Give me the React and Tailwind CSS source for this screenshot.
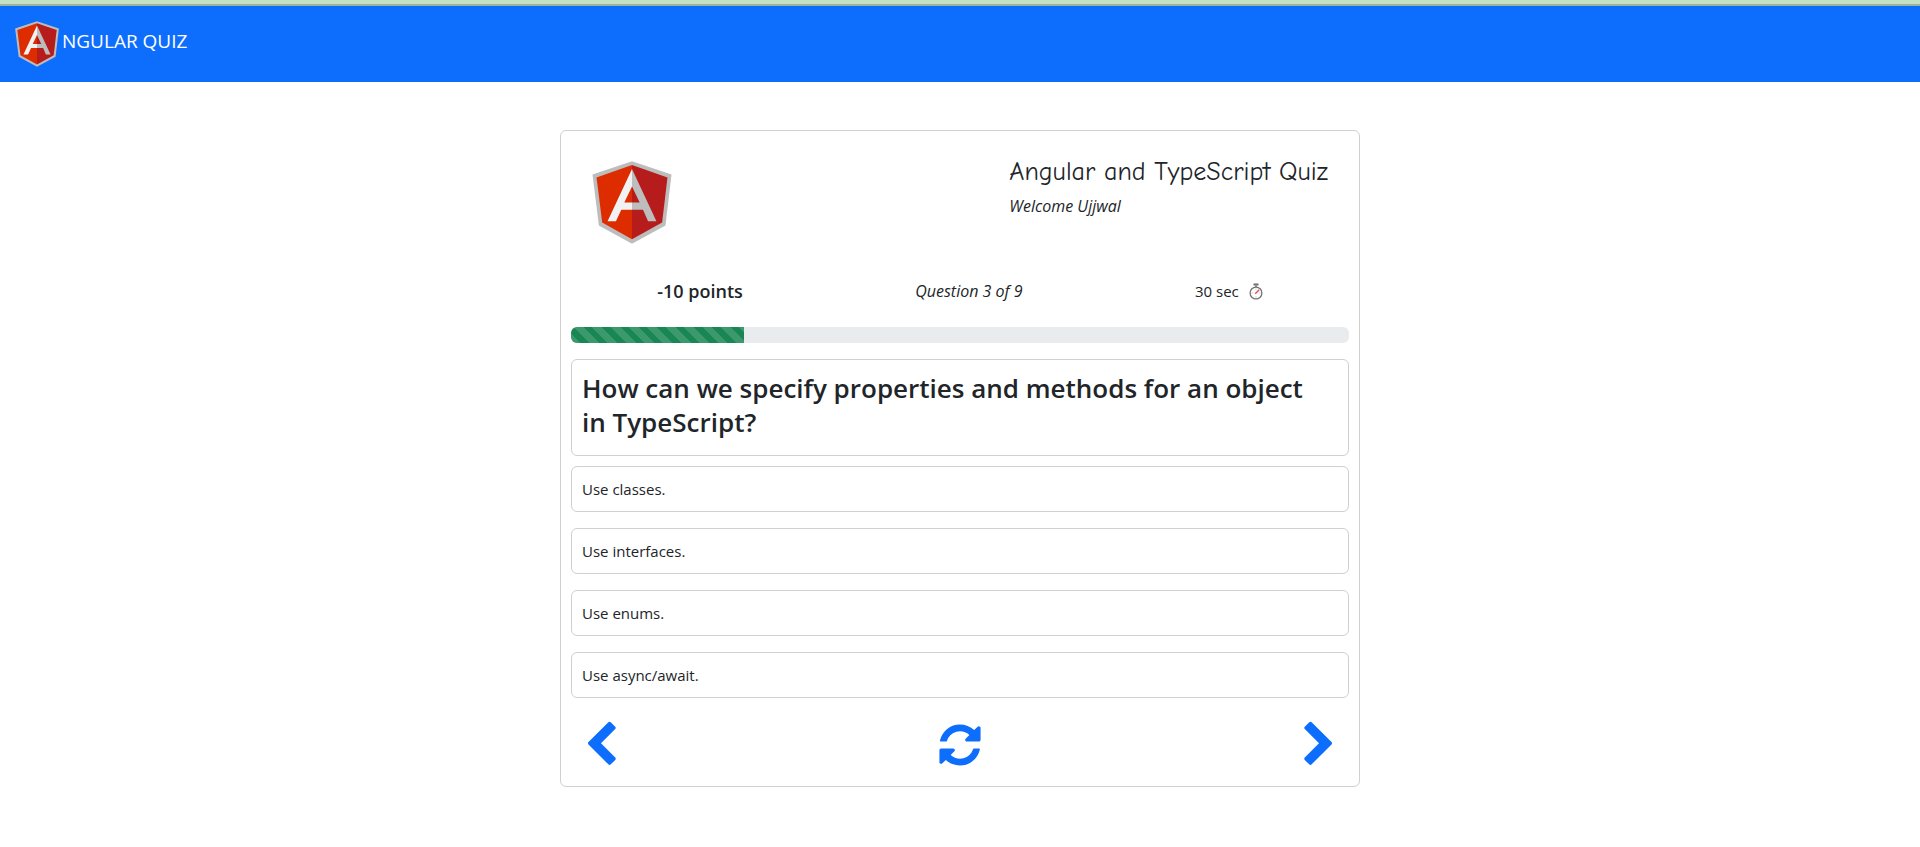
import React, { useState } from "react";

const options = ["Use classes.", "Use interfaces.", "Use enums.", "Use async/await."];

function AngularLogo({ className }) {
  return (
    <svg viewBox="128 122 236 248" className={className} role="img" aria-label="Angular">
      <path fill="#bdbdbd" d="M246 123l118 39-18 153-100 54-99-54-19-153z" />
      <path fill="#b71c1c" d="M246 134l106 37-16 135-90 50z" />
      <path fill="#dd2c00" d="M246 134l-106 37 17 135 89 50z" />
      <path fill="#f2f2f2" d="M246 146l-73 156h25l16-34h32v-22h-23l23-48z" />
      <path fill="#bdbdbd" d="M246 146l73 156h-25l-15-34h-33v-22h23l-23-48z" />
    </svg>
  );
}

function Stopwatch() {
  return (
    <svg viewBox="0 0 14 17" className="h-[17px] w-3.5" aria-hidden="true">
      <path fill="#6b6b6b" d="M4.5.5h5v2h-5z" />
      <path fill="#8a8a8a" d="M6 2.500h2v2H6z" />
      <circle cx="7" cy="10" r="5.900" fill="#fff" stroke="#737373" strokeWidth="1.300" />
      <path stroke="#b5b5b5" strokeWidth=".8" d="M7 5.500v1.200M7 13.300v1.200M2.500 10h1.200M10.300 10h1.200" />
      <path stroke="#e5484d" strokeWidth="1.300" d="M6.200 10.800l4-4" />
    </svg>
  );
}

function Icon({ d }) {
  return (
    <svg viewBox="0 0 1792 1792" className="size-12" fill="currentColor" aria-hidden="true">
      <path d={d} />
    </svg>
  );
}

const LEFT =
  "M1427 301l-531 531 531 531q19 19 19 45t-19 45l-166 166q-19 19-45 19t-45-19l-742-742q-19-19-19-45t19-45l742-742q19-19 45-19t45 19l166 166q19 19 19 45t-19 45z";
const RIGHT =
  "M1363 877l-742 742q-19 19-45 19t-45-19l-166-166q-19-19-19-45t19-45l531-531-531-531q-19-19-19-45t19-45l166-166q19-19 45-19t45 19l742 742q19 19 19 45t-19 45z";
const REFRESH =
  "M1639 1056q0 5-1 7-64 268-268 434.500t-478 166.500q-146 0-282.500-55t-243.500-157l-129 129q-19 19-45 19t-45-19-19-45v-448q0-26 19-45t45-19h448q26 0 45 19t19 45-19 45l-137 137q71 66 161 102t187 36q134 0 250-65t186-179q11-17 53-117 8-23 30-23h192q13 0 22.500 9.500t9.500 22.500zm25-800v448q0 26-19 45t-45 19h-448q-26 0-45-19t-19-45 19-45l138-138q-148-137-349-137-134 0-250 65t-186 179q-11 17-53 117-8 23-30 23h-199q-13 0-22.500-9.500t-9.500-22.500v-7q65-268 270-434.500t480-166.500q146 0 284 55.500t245 156.500l130-129q19-19 45-19t45 19 19 45z";

export default function App() {
  const [current, setCurrent] = useState(2);
  const total = 9;
  return (
    <div className="min-h-screen bg-white font-['Open_Sans','Noto_Sans',sans-serif] text-[15px] leading-6 text-[#212529]">
      <div className="h-1.5 border-b-2 border-[#9cb39c] bg-[#c5e1c5]" />
      <header className="flex h-19 items-start bg-[#0d6efd] px-[15px] pt-[15px]">
        <a href="#" className="flex items-start gap-[3px] text-white">
          <AngularLogo className="h-[46px] w-11" />
          <span className="pt-1.5 text-[19px] leading-7">NGULAR QUIZ</span>
        </a>
      </header>

      <main className="mx-auto mt-12 w-full max-w-[800px] rounded-md border border-[#d0d0d0] px-2.5">
        <div className="flex justify-between px-[21px] pt-[25px]">
          <AngularLogo className="mt-[5px] mb-1 h-[83px] w-20" />
          <div>
            <h1 className="font-['Comic_Neue','Comic_Sans_MS','Open_Sans',cursive] text-[26px] leading-8 font-medium">
              Angular and TypeScript Quiz
            </h1>
            <p className="mt-1.5 text-base italic">Welcome Ujjwal</p>
          </div>
        </div>

        <div className="mt-[31px] flex items-center justify-around">
          <p className="text-lg leading-6 font-semibold">-10 points</p>
          <p className="text-base leading-6 italic">Question {current + 1} of {total}</p>
          <p className="flex items-center gap-2.5">
            30 sec <Stopwatch />
          </p>
        </div>

        <div
          role="progressbar"
          aria-label="Quiz progress"
          aria-valuemin={0}
          aria-valuemax={total}
          aria-valuenow={current}
          className="mt-6 h-4 overflow-hidden rounded-md bg-[#e9ecef]"
        >
          <div
            className="h-full bg-[#198754] bg-[repeating-linear-gradient(45deg,rgba(255,255,255,.15)_0px,rgba(255,255,255,.15)_7px,transparent_7px,transparent_13px)]"
            style={{ width: `${(current / total) * 100}%` }}
          />
        </div>

        <div className="mt-4 rounded-md border border-[#d0d0d0] pt-[11px] pr-6 pb-4 pl-2.5">
          <h2 className="text-[26px] leading-[34px] font-semibold">
            How can we specify properties and methods for an object in TypeScript?
          </h2>
        </div>

        <ol className="mt-2.5 flex flex-col gap-4">
          {options.map((o) => (
            <li key={o} className="flex">
              <button type="button" className="w-full rounded-md border border-[#d0d0d0] px-2.5 py-2.5 text-left">
                {o}
              </button>
            </li>
          ))}
        </ol>

        <div className="flex justify-between px-1.5 pt-[23px] pb-[17px] text-[#0d6efd]">
          <button type="button" aria-label="Previous question" onClick={() => setCurrent(Math.max(0, current - 1))}>
            <Icon d={LEFT} />
          </button>
          <button type="button" aria-label="Restart quiz" onClick={() => setCurrent(0)}>
            <Icon d={REFRESH} />
          </button>
          <button type="button" aria-label="Next question" onClick={() => setCurrent(Math.min(total - 1, current + 1))}>
            <Icon d={RIGHT} />
          </button>
        </div>
      </main>
    </div>
  );
}
